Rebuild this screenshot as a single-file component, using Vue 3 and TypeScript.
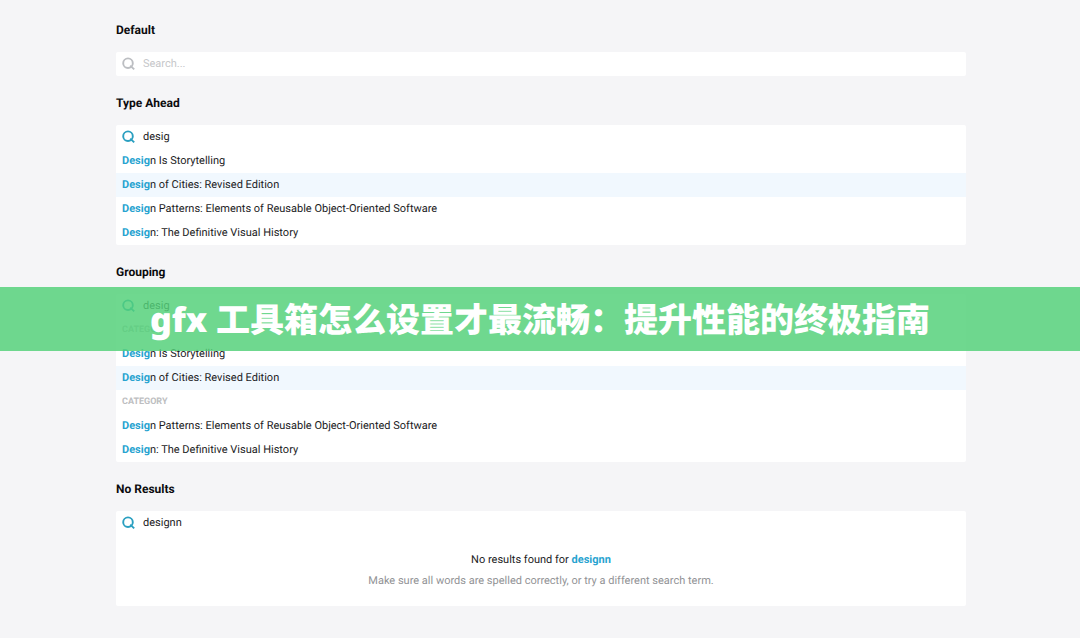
<script setup lang="ts">
import { ref } from 'vue'

interface Item {
  match: string
  rest: string
  active?: boolean
}
interface Group {
  label?: string
  items: Item[]
}
interface Sample {
  id: string
  title: string
  query: string
  groups: Group[]
  empty?: boolean
}

const first: Item[] = [
  { match: 'Desig', rest: 'n Is Storytelling' },
  { match: 'Desig', rest: 'n of Cities: Revised Edition', active: true },
]
const second: Item[] = [
  { match: 'Desig', rest: 'n Patterns: Elements of Reusable Object-Oriented Software' },
  { match: 'Desig', rest: 'n: The Definitive Visual History' },
]

const samples = ref<Sample[]>([
  { id: 'default', title: 'Default', query: '', groups: [] },
  { id: 'type-ahead', title: 'Type Ahead', query: 'desig', groups: [{ items: [...first, ...second] }] },
  {
    id: 'grouping',
    title: 'Grouping',
    query: 'desig',
    groups: [
      { label: 'CATEGORY', items: first },
      { label: 'CATEGORY', items: second },
    ],
  },
  { id: 'no-results', title: 'No Results', query: 'designn', groups: [], empty: true },
])
</script>

<template>
  <main class="page">
    <section v-for="s in samples" :key="s.id" class="sample">
      <h2 class="title"><label :for="s.id">{{ s.title }}</label></h2>
      <div class="panel">
        <div class="field" :class="{ filled: s.query }">
          <svg class="icon" viewBox="0 0 14 14" aria-hidden="true">
            <circle cx="6" cy="6.2" r="4.8" />
            <path d="M8.2 8.6 12.2 12.4" />
          </svg>
          <input :id="s.id" v-model="s.query" class="input" type="text" placeholder="Search..." autocomplete="off" />
        </div>
        <template v-for="(g, gi) in s.groups" :key="gi">
          <h3 v-if="g.label" class="category">{{ g.label }}</h3>
          <ul class="list">
            <li v-for="item in g.items" :key="item.rest" class="item" :class="{ active: item.active }">
              <b class="match">{{ item.match }}</b>{{ item.rest }}
            </li>
          </ul>
        </template>
        <div v-if="s.empty" class="empty">
          <p class="empty-title">No results found for <b class="match">{{ s.query }}</b></p>
          <p class="empty-hint">Make sure all words are spelled correctly, or try a different search term.</p>
        </div>
      </div>
    </section>
    <div class="banner">
      <h1 class="banner-text">gfx 工具箱怎么设置才最流畅：提升性能的终极指南</h1>
    </div>
  </main>
</template>

<style>
body {
  margin: 0;
  background: #f5f5f7;
}
</style>

<style scoped>
.page {
  position: relative;
  box-sizing: border-box;
  min-height: 100vh;
  padding: 3px 114px 32px 116px;
  background: #f5f5f7;
  color: #1c1c1e;
  font-family: Roboto, "Liberation Sans", sans-serif;
  font-size: 11px;
  line-height: 24px;
  text-rendering: geometricPrecision;
}
.title {
  margin: 0;
  padding: 15px 0 10px;
  color: #0c0c0e;
  font-size: 12px;
  font-weight: 700;
  line-height: 24px;
}
.panel {
  border-radius: 2px;
  background: #fff;
}
.field {
  display: flex;
  align-items: center;
  gap: 7px;
  height: 24px;
  padding: 0 6px;
  color: #bcbec2;
}
.field.filled {
  color: #2a9fc0;
}
.icon {
  flex: none;
  width: 14px;
  height: 14px;
  fill: none;
  stroke: currentColor;
  stroke-width: 1.9;
}
.input {
  flex: 1;
  min-width: 0;
  height: 24px;
  padding: 0;
  border: 0;
  outline: 0;
  background: transparent;
  color: #1c1c1e;
  font: inherit;
  text-rendering: inherit;
}
.input::placeholder {
  color: #c6c7ca;
  opacity: 1;
}
.list {
  margin: 0;
  padding: 0;
  list-style: none;
}
.item {
  padding: 0 6px;
}
.item.active {
  background: #f1f8fe;
}
.match {
  color: #27a3d0;
  font-weight: 700;
}
.category {
  margin: 0;
  padding: 0 6px;
  color: #bdbec1;
  font-size: 9px;
  font-weight: 700;
  line-height: 24px;
}
.empty {
  padding: 14px 6px 15px;
  text-align: center;
}
.empty p {
  margin: 0;
  line-height: 21px;
}
.empty-hint {
  color: #929396;
}
.banner {
  position: absolute;
  top: 287px;
  right: 0;
  left: 0;
  background: rgba(84, 209, 122, 0.84);
}
.banner-text {
  margin: 0;
  color: #fff;
  font-family: "Noto Sans", "Noto Sans CJK SC", sans-serif;
  font-size: 34px;
  font-weight: 900;
  line-height: 64px;
  text-align: center;
}
</style>
